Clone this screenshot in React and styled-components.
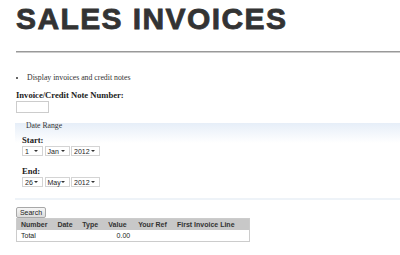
import React from "react";
import styled, { createGlobalStyle } from "styled-components";

const GlobalStyle = createGlobalStyle`
  html, body {
    margin: 0;
    padding: 0;
    background: #fff;
  }
  body {
    font-family: "Liberation Serif", "Times New Roman", serif;
    color: #222;
    overflow: hidden;
  }
`;

const Page = styled.div`
  padding: 4px 0 0 16px;
  width: 400px;
  box-sizing: border-box;
  overflow: hidden;
`;

const Title = styled.h1`
  margin: 0;
  font-family: "Liberation Sans", Arial, sans-serif;
  font-size: 30px;
  line-height: 30px;
  font-weight: bold;
  letter-spacing: 1.4px;
  color: #333;
  -webkit-text-stroke: 0.8px #333;
`;

const Rule = styled.div`
  height: 1px;
  margin: 17px -20px 0 0;
  background: #999;
  border-bottom: 1px solid #ccc;
`;

const Notes = styled.ul`
  margin: 20px 0 0 0;
  padding: 0 0 0 11px;
  font-size: 7.8px;
  line-height: 10px;
  color: #333;
  li {
    list-style: disc;
  }
`;

const Label = styled.div`
  font-size: 8.6px;
  line-height: 10px;
  font-weight: bold;
  color: #222;
  margin-top: ${(p) => p.$top || 0}px;
`;

const TextBox = styled.div`
  width: 31px;
  height: 10px;
  margin-top: 1px;
  border: 1px solid #ccc;
  background: #fff;
`;

const DateRange = styled.div`
  margin: 10px -20px 0 -1px;
  height: 75px;
  padding: 0 0 0 7px;
  background: linear-gradient(#e6eef8, #fff 20px);
  border-bottom: 2px solid #eef3f8;
`;

const Legend = styled.div`
  padding-left: 4px;
  font-size: 7.7px;
  line-height: 5px;
  color: #333;
`;

const SelectRow = styled.div`
  display: flex;
  gap: 1.5px;
  margin-top: 1px;
`;

const Select = styled.div`
  display: flex;
  align-items: center;
  justify-content: space-between;
  width: ${(p) => p.$w}px;
  height: 10px;
  padding: 0 4px 0 2px;
  border: 1px solid #d4d4d4;
  background: #fff;
  font-family: "Liberation Sans", Arial, sans-serif;
  font-size: 7px;
  color: #222;
  box-sizing: border-box;
`;

const Arrow = styled.span`
  width: 0;
  height: 0;
  border-left: 2px solid transparent;
  border-right: 2px solid transparent;
  border-top: 2.5px solid #333;
`;

const Button = styled.button`
  display: block;
  margin-top: 7px;
  width: 30px;
  height: 11px;
  padding: 0;
  border: 1px solid #a8a8a8;
  border-radius: 2px;
  background: linear-gradient(#f6f6f6, #dcdcdc);
  font-family: "Liberation Sans", Arial, sans-serif;
  font-size: 7px;
  line-height: 9px;
  color: #222;
`;

const Table = styled.table`
  border-collapse: collapse;
  width: 234px;
  border: 1px solid #ccc;
  font-family: "Liberation Sans", Arial, sans-serif;
  font-size: 7px;
  color: #222;
  th {
    background: #c8c8c8;
    font-weight: bold;
    text-align: left;
    color: #333;
    height: 11px;
    padding: 0 0 0 4px;
  }
  td {
    height: 11px;
    padding: 0 0 0 4px;
  }
  td.num {
    text-align: right;
    padding-right: 4px;
  }
`;

const cols = [37, 25, 26, 30, 39, 77];
const heads = ["Number", "Date", "Type", "Value", "Your Ref", "First Invoice Line"];

const DateSelects = ({ day, month, year }) => (
  <SelectRow>
    <Select $w={21}>
      {day}
      <Arrow />
    </Select>
    <Select $w={25}>
      {month}
      <Arrow />
    </Select>
    <Select $w={29}>
      {year}
      <Arrow />
    </Select>
  </SelectRow>
);

export default function App() {
  return (
    <Page>
      <GlobalStyle />
      <Title>SALES INVOICES</Title>
      <Rule />
      <Notes>
        <li>Display invoices and credit notes</li>
      </Notes>
      <Label $top={7}>Invoice/Credit Note Number:</Label>
      <TextBox />
      <DateRange>
        <Legend>Date Range</Legend>
        <Label $top={7}>Start:</Label>
        <DateSelects day="1" month="Jan" year="2012" />
        <Label $top={10}>End:</Label>
        <DateSelects day="26" month="May" year="2012" />
      </DateRange>
      <Button>Search</Button>
      <Table>
        <colgroup>
          {cols.map((w, i) => (
            <col key={i} style={{ width: w }} />
          ))}
        </colgroup>
        <thead>
          <tr>
            {heads.map((h) => (
              <th key={h}>{h}</th>
            ))}
          </tr>
        </thead>
        <tbody>
          <tr>
            <td>Total</td>
            <td></td>
            <td></td>
            <td className="num">0.00</td>
            <td></td>
            <td></td>
          </tr>
        </tbody>
      </Table>
    </Page>
  );
}
